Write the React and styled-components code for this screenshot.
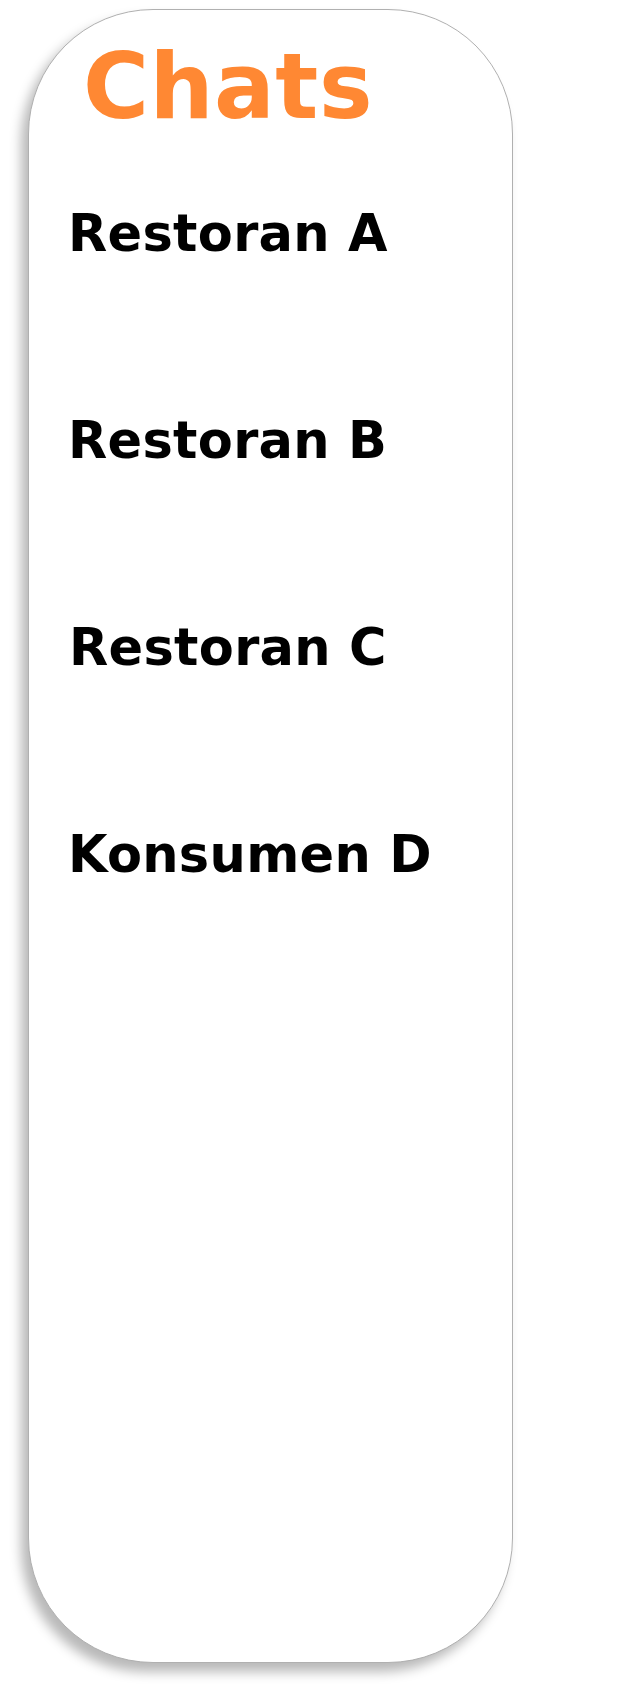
import React from "react";
import styled, { createGlobalStyle } from "styled-components";

const GlobalStyle = createGlobalStyle`
  html, body {
    margin: 0;
    padding: 0;
    background: #ffffff;
  }
  body {
    font-family: "DejaVu Sans", "Liberation Sans", sans-serif;
  }
`;

const Page = styled.div`
  width: 640px;
  height: 1690px;
  padding: 9px 0 0 28px;
  box-sizing: border-box;
`;

const Panel = styled.div`
  width: 485px;
  height: 1654px;
  box-sizing: border-box;
  border: 1px solid #b0b0b0;
  border-radius: 125px;
  background: #ffffff;
  box-shadow: -7px 9px 12px rgba(0, 0, 0, 0.28);
  padding: 32px 0 0 39px;
  display: flex;
  flex-direction: column;
`;

const Title = styled.h1`
  margin: 0 0 72px 15px;
  font-size: 90px;
  line-height: 90px;
  font-weight: 700;
  color: #ff8833;
  letter-spacing: 0.5px;
`;

const ChatList = styled.ul`
  list-style: none;
  margin: 0;
  padding: 0;
  display: flex;
  flex-direction: column;
  gap: 147px;
`;

const ChatItem = styled.li`
  font-size: 51px;
  line-height: 60px;
  font-weight: 700;
  color: #000000;
  letter-spacing: 0.3px;
  padding-left: ${(p) => (p.$indent ? "1px" : "0")};
`;

const chats = [
  { name: "Restoran A" },
  { name: "Restoran B" },
  { name: "Restoran C", indent: true },
  { name: "Konsumen D" },
];

const App = () => {
  return (
    <>
      <GlobalStyle />
      <Page>
        <Panel>
          <Title>Chats</Title>
          <ChatList>
            {chats.map((c) => (
              <ChatItem key={c.name} $indent={c.indent}>
                {c.name}
              </ChatItem>
            ))}
          </ChatList>
        </Panel>
      </Page>
    </>
  );
};

export default App;
